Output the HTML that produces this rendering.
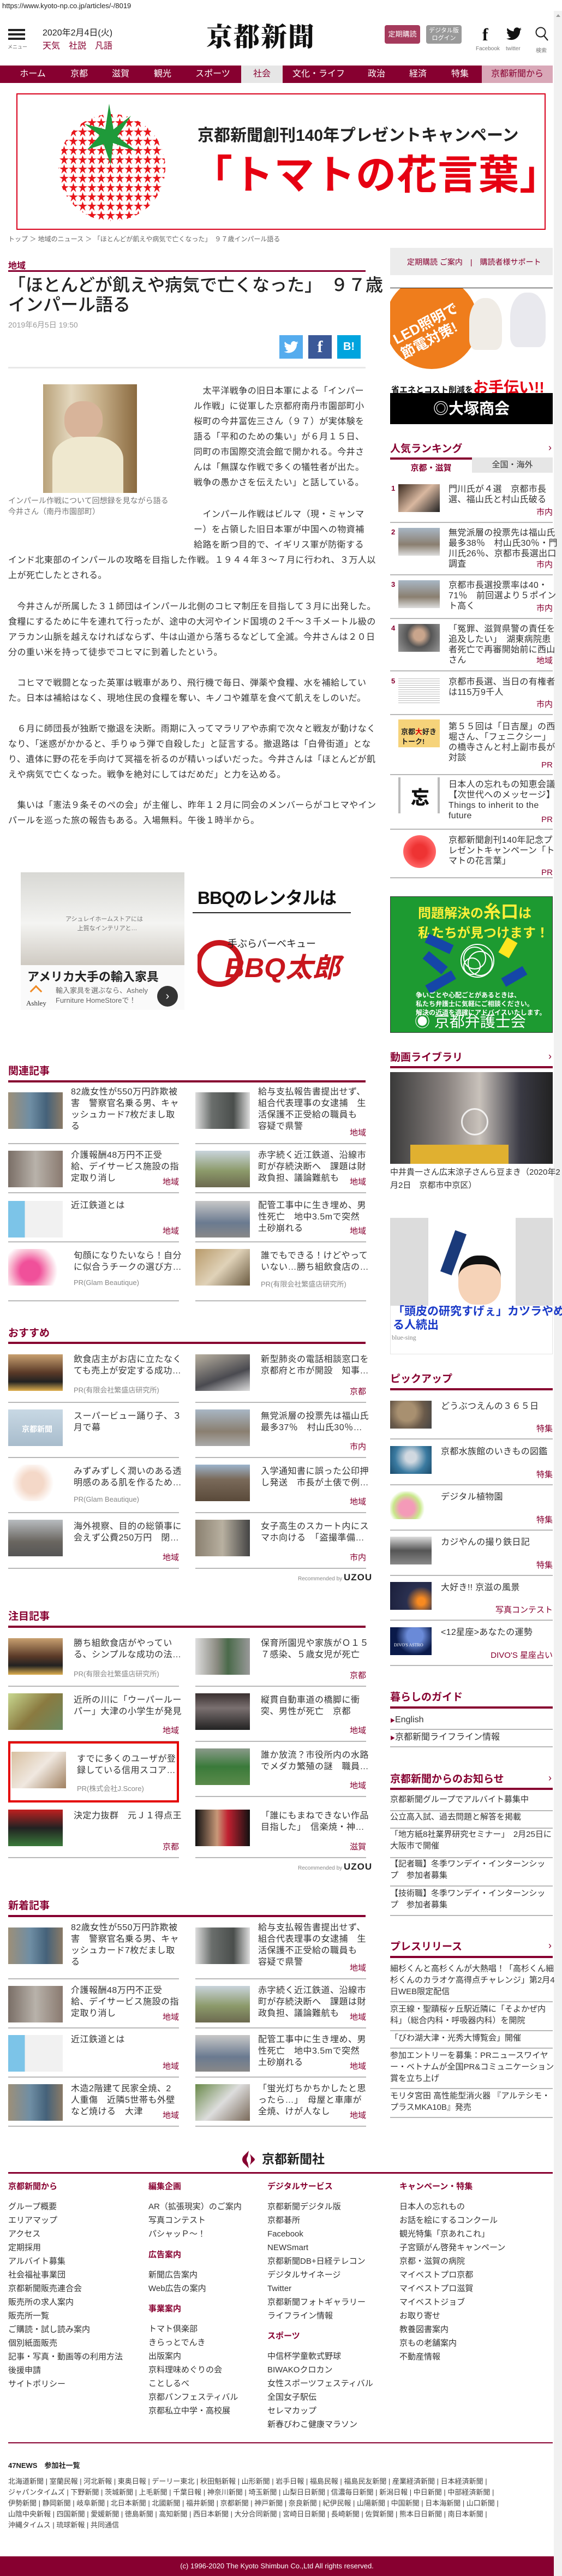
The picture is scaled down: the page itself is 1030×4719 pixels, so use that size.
<!DOCTYPE html>
<html lang="ja"><head><meta charset="utf-8">
<style>
*{box-sizing:border-box}
body{margin:0;width:1030px;height:4719px;position:relative;background:#fff;font-family:"Liberation Sans","Noto Sans CJK JP",sans-serif;color:#333;overflow:hidden}
.a{position:absolute}
.nw{white-space:nowrap}
.cr{color:#870030}
.h2{position:absolute;font-size:19px;color:#870030;font-weight:bold;line-height:24px;white-space:nowrap}
.ln{position:absolute;height:4px;background:#870030}
.it{position:absolute;width:313px;border-bottom:2px solid #b8b8b8}
.th{position:absolute;left:0;width:100px;height:67px;display:block}
.tt{position:absolute;left:115px;margin:0;font-size:16px;line-height:21px;white-space:nowrap;color:#333;letter-spacing:.5px}
.pt{left:120px}
.ct{position:absolute;right:0;bottom:9px;font-weight:normal;color:#870030;font-size:15px}
.pr{position:absolute;left:120px;font-size:13px;color:#888;white-space:nowrap}
.si{position:absolute;left:715px;width:298px;border-bottom:2px solid #b8b8b8}
.st{position:absolute;left:107px;margin:0;font-size:16px;line-height:19px;white-space:nowrap;color:#333;letter-spacing:.3px}
.sth{position:absolute;left:15px;width:76px;height:51px;display:block}
.num{position:absolute;left:2px;font-size:13px;font-weight:bold;color:#870030}
.sc{position:absolute;right:0;bottom:8px;color:#870030;font-size:15px}
.pk .sth{left:0}
.pk .st{left:93px}
.bl{position:absolute;white-space:nowrap;font-size:16px;letter-spacing:.45px;line-height:28px;color:#333}
.fl{position:absolute;font-size:15px;line-height:25px;color:#333;white-space:nowrap}
.fh{font-weight:bold;color:#870030;display:block;height:37px;line-height:25px}
.ni{position:absolute;top:0;height:32px;line-height:32px;text-align:center;color:#fff;font-size:16px}
.ls{position:absolute;left:715px;width:298px;font-size:15px;line-height:21px;white-space:nowrap;color:#333;border-bottom:2px solid #b8b8b8}
</style></head><body>

<div class="a nw" style="left:4px;top:3px;font-size:13px;color:#222">https://www.kyoto-np.co.jp/articles/-/8019</div>
<div class="a" style="left:1015px;top:20px;width:15px;height:4699px;background:#f1f1f1"></div>
<div class="a" style="left:1019px;top:26px;width:0;height:0;border-left:4px solid transparent;border-right:4px solid transparent;border-bottom:5px solid #999"></div>

<div class="a" style="left:15px;top:53px;width:31px;height:4px;background:#222"></div>
<div class="a" style="left:15px;top:61px;width:31px;height:4px;background:#222"></div>
<div class="a" style="left:15px;top:69px;width:31px;height:4px;background:#222"></div>
<div class="a nw" style="left:14px;top:79px;font-size:9px;color:#666">メニュー</div>
<div class="a nw" style="left:78px;top:46px;font-size:16px;color:#222">2020年2月4日(火)</div>
<div class="a nw cr" style="left:78px;top:70px;font-size:16px">天気　社説　凡語</div>
<div class="a nw" style="left:378px;top:36px;font-size:48px;font-weight:900;font-family:'Noto Serif CJK SC',serif;color:#111;letter-spacing:2px;line-height:56px">京都新聞</div>
<div class="a" style="left:705px;top:46px;width:65px;height:34px;background:#a53a5c;border-radius:4px;color:#fff;font-size:13px;text-align:center;line-height:34px">定期購読</div>
<div class="a" style="left:781px;top:46px;width:65px;height:34px;background:#9a9a9a;border-radius:4px;color:#fff;font-size:11px;text-align:center;line-height:14px;padding-top:3px">デジタル版<br>ログイン</div>
<div class="a" style="left:884px;top:46px;font-size:32px;font-weight:bold;color:#111;font-family:'Liberation Serif',serif;line-height:34px">f</div>
<svg class="a" style="left:928px;top:50px" width="28" height="24" viewBox="0 0 24 20"><path d="M24 2.4a9.8 9.8 0 0 1-2.8.8A4.9 4.9 0 0 0 23.3.4a9.8 9.8 0 0 1-3.1 1.2A4.9 4.9 0 0 0 11.8 6 14 14 0 0 1 1.7.9a4.9 4.9 0 0 0 1.5 6.6 4.9 4.9 0 0 1-2.2-.6 4.9 4.9 0 0 0 3.9 4.9 4.9 4.9 0 0 1-2.200.1 4.9 4.9 0 0 0 4.6 3.4A9.9 9.9 0 0 1 0 17.3 14 14 0 0 0 7.5 19.5c9 0 14-7.5 14-14v-.6A10 10 0 0 0 24 2.4z" fill="#111"/></svg>
<svg class="a" style="left:980px;top:48px" width="26" height="28" viewBox="0 0 26 28"><circle cx="11" cy="11" r="8.5" fill="none" stroke="#222" stroke-width="2"/><line x1="17" y1="17.5" x2="24" y2="26" stroke="#222" stroke-width="2.2"/></svg>
<div class="a nw" style="left:872px;top:84px;font-size:10px;color:#777">Facebook</div>
<div class="a nw" style="left:927px;top:84px;font-size:10px;color:#777">twitter</div>
<div class="a nw" style="left:982px;top:84px;font-size:10px;color:#777">検索</div>

<div class="a" style="left:0;top:120px;width:1013px;height:32px;background:#870030">
<div class="ni" style="left:20px;width:80px">ホーム</div>
<div class="ni" style="left:105px;width:80px">京都</div>
<div class="ni" style="left:181px;width:80px">滋賀</div>
<div class="ni" style="left:258px;width:80px">観光</div>
<div class="ni" style="left:345px;width:90px">スポーツ</div>
<div class="ni" style="left:442px;width:76px;background:#e6e6e6;color:#870030">社会</div>
<div class="ni" style="left:534px;width:100px">文化・ライフ</div>
<div class="ni" style="left:650px;width:80px">政治</div>
<div class="ni" style="left:726px;width:80px">経済</div>
<div class="ni" style="left:803px;width:80px">特集</div>
<div class="ni" style="left:883px;width:130px;background:#d9a8b8;color:#870030">京都新聞から</div>
</div>

<div class="a" style="left:30px;top:171px;width:970px;height:250px;border:2px solid #d9001b"></div>
<svg class="a" style="left:75px;top:182px" width="260" height="225" viewBox="0 0 260 225">
<defs><pattern id="st" width="17" height="17" patternUnits="userSpaceOnUse"><polygon points="8.5,0 10.5,6 17,6.5 11.5,10 13.5,17 8.5,12.5 3.5,17 5.5,10 0,6.5 6.5,6" fill="#e8151b"/></pattern></defs>
<circle cx="130" cy="125" r="98" fill="url(#st)"/>
<path d="M125 8 L133 55 L165 30 L140 68 L175 95 L132 80 L128 120 L115 82 L85 92 L108 66 L80 45 L118 55 Z" fill="#1f9a3a"/>
</svg>
<div class="a nw" style="left:362px;top:230px;font-size:30px;font-weight:bold;color:#222;line-height:38px">京都新聞創刊140年プレゼントキャンペーン</div>
<div class="a nw" style="left:352px;top:276px;font-size:74px;font-weight:bold;color:#e60012;line-height:90px;letter-spacing:1px">「トマトの花言葉」</div>

<div class="a nw" style="left:15px;top:429px;font-size:12px;color:#666">トップ ＞ 地域のニュース ＞ 「ほとんどが飢えや病気で亡くなった」　９７歳インパール語る</div>

<div class="a nw cr" style="left:15px;top:473px;font-size:16px;font-weight:bold">地域</div>
<div class="a" style="left:15px;top:495px;width:655px;height:3px;background:#870030"></div>
<div class="a nw" style="left:15px;top:504px;font-size:32px;line-height:36px;color:#222;font-weight:500">「ほとんどが飢えや病気で亡くなった」　９７歳<br>インパール語る</div>
<div class="a nw" style="left:15px;top:585px;font-size:14px;color:#999">2019年6月5日 19:50</div>
<div class="a" style="left:512px;top:614px;width:43px;height:43px;background:#55acee"></div>
<svg class="a" style="left:520px;top:625px" width="27" height="22" viewBox="0 0 24 20"><path d="M24 2.4a9.8 9.8 0 0 1-2.8.8A4.9 4.9 0 0 0 23.3.4a9.8 9.8 0 0 1-3.1 1.2A4.9 4.9 0 0 0 11.8 6 14 14 0 0 1 1.7.9a4.9 4.9 0 0 0 1.5 6.6 4.9 4.9 0 0 1-2.2-.6 4.9 4.9 0 0 0 3.9 4.9 4.9 4.9 0 0 1-2.2.1 4.9 4.9 0 0 0 4.6 3.4A9.9 9.9 0 0 1 0 17.3 14 14 0 0 0 7.5 19.5c9 0 14-7.5 14-14v-.6A10 10 0 0 0 24 2.4z" fill="#fff"/></svg>
<div class="a" style="left:565px;top:614px;width:43px;height:43px;background:#3b5998;color:#fff;font-size:30px;font-weight:bold;text-align:center;line-height:43px;font-family:'Liberation Serif',serif">f</div>
<div class="a" style="left:618px;top:614px;width:43px;height:43px;background:#00a4de;color:#fff;font-size:20px;font-weight:bold;text-align:center;line-height:43px">B!</div>
<div class="a" style="left:15px;top:672px;width:655px;height:3px;background:#e8e8e8"></div>

<div class="a" style="left:79px;top:704px;width:172px;height:199px;background:linear-gradient(90deg,#b9a27a 0%,#e4d8bf 30%,#c7b08a 60%,#8a6a40 100%)"></div>
<div class="a" style="left:118px;top:735px;width:70px;height:70px;border-radius:45%;background:#d8b49a"></div>
<div class="a" style="left:96px;top:800px;width:130px;height:103px;border-radius:40% 40% 0 0;background:#efe8cf"></div>
<div class="a nw" style="left:15px;top:907px;font-size:14px;line-height:20px;color:#777">インパール作戦について回想録を見ながら語る<br>今井さん（南丹市園部町）</div>

<div class="bl" style="left:355px;top:703px">　太平洋戦争の旧日本軍による「インパー<br>ル作戦」に従軍した京都府南丹市園部町小<br>桜町の今井冨佐三さん（９７）が実体験を<br>語る「平和のための集い」が６月１５日、<br>同町の市国際交流会館で開かれる。今井さ<br>んは「無謀な作戦で多くの犠牲者が出た。<br>戦争の愚かさを伝えたい」と話している。</div>
<div class="bl" style="left:355px;top:929px">　インパール作戦はビルマ（現・ミャンマ<br>ー）を占領した旧日本軍が中国への物資補<br>給路を断つ目的で、イギリス軍が防衛する</div>
<div class="bl" style="left:15px;top:1013px">インド北東部のインパールの攻略を目指した作戦。１９４４年３～７月に行われ、３万人以<br>上が死亡したとされる。</div>
<div class="bl" style="left:15px;top:1098px">　今井さんが所属した３１師団はインパール北側のコヒマ制圧を目指して３月に出発した。<br>食糧にするために牛を連れて行ったが、途中の大河やインド国境の２千～３千メートル級の<br>アラカン山脈を越えなければならず、牛は山道から落ちるなどして全滅。今井さんは２０日<br>分の重い米を持って徒歩でコヒマに到着したという。</div>
<div class="bl" style="left:15px;top:1238px">　コヒマで戦闘となった英軍は戦車があり、飛行機で毎日、弾薬や食糧、水を補給してい<br>た。日本は補給はなく、現地住民の食糧を奪い、キノコや雑草を食べて飢えをしのいだ。</div>
<div class="bl" style="left:15px;top:1322px">　６月に師団長が独断で撤退を決断。雨期に入ってマラリアや赤痢で次々と戦友が動けなく<br>なり、「迷惑がかかると、手りゅう弾で自殺した」と証言する。撤退路は「白骨街道」とな<br>り、遺体に野の花を手向けて冥福を祈るのが精いっぱいだった。今井さんは「ほとんどが飢<br>えや病気で亡くなった。戦争を絶対にしてはだめだ」と力を込める。</div>
<div class="bl" style="left:15px;top:1462px">　集いは「憲法９条そのぺの会」が主催し、昨年１２月に同会のメンバーらがコヒマやイン<br>パールを巡った旅の報告もある。入場無料。午後１時半から。</div>

<div class="a" style="left:38px;top:1598px;width:300px;height:252px;background:#fafafa"></div>
<div class="a" style="left:38px;top:1598px;width:300px;height:170px;background:linear-gradient(180deg,#d8d8d4,#f4f4f2 55%,#cfcac2)"></div>
<div class="a nw" style="left:120px;top:1676px;font-size:11px;color:#777;text-align:center;line-height:17px">アシュレイホームストアには<br>　上質なインテリアと…</div>
<div class="a nw" style="left:50px;top:1772px;font-size:22px;font-weight:bold;color:#222">アメリカ大手の輸入家具</div>
<div class="a" style="left:58px;top:1808px;width:16px;height:16px;border:3px solid #f08a24;transform:rotate(45deg);border-right:none;border-bottom:none"></div>
<div class="a nw" style="left:48px;top:1830px;font-size:13px;font-family:'Liberation Serif',serif;color:#333">Ashley</div>
<div class="a nw" style="left:102px;top:1806px;font-size:13px;color:#666;line-height:18px">輸入家具を選ぶなら、Ashely<br>Furniture HomeStoreで！</div>
<div class="a" style="left:288px;top:1806px;width:38px;height:38px;border-radius:50%;background:#333;color:#fff;text-align:center;line-height:38px;font-size:20px">›</div>
<div class="a nw" style="left:362px;top:1620px;font-size:32px;font-weight:bold;color:#111;letter-spacing:-1px">BBQのレンタルは</div>
<div class="a" style="left:353px;top:1671px;width:290px;height:2px;background:#222"></div>
<svg class="a" style="left:362px;top:1710px" width="275" height="100" viewBox="0 0 275 100"><circle cx="40" cy="55" r="38" fill="none" stroke="#c8161d" stroke-width="10"/><text x="50" y="80" font-size="50" font-weight="bold" fill="#c8161d" font-family="Liberation Sans,Noto Sans CJK JP,sans-serif" font-style="italic">BBQ太郎</text><text x="55" y="25" font-size="18" fill="#222" font-family="Noto Sans CJK JP,sans-serif">手ぶらバーベキュー</text></svg>

<div class="a" style="left:715px;top:454px;width:298px;height:50px;background:#ececec"></div>
<div class="a nw cr" style="left:746px;top:470px;font-size:14px">定期購読 ご案内　|　購読者様サポート</div>
<div class="a" style="left:715px;top:527px;width:298px;height:250px;background:#fff;border-top:1px solid #222;overflow:hidden">
<div class="a" style="left:-9px;top:-22px;width:170px;height:170px;border-radius:50%;background:#ef7d1c"></div>
<div class="a nw" style="left:7px;top:48px;font-size:26px;font-weight:bold;color:#fff;transform:rotate(-28deg);line-height:30px">LED照明で<br>節電対策!</div>
<div class="a" style="left:145px;top:18px;width:60px;height:95px;border-radius:45% 45% 20% 20%;background:#f0ece6"></div>
<div class="a" style="left:220px;top:8px;width:65px;height:100px;border-radius:45% 45% 20% 20%;background:#e9e9ee"></div>
</div>
<div class="a nw" style="left:717px;top:688px;font-size:15px;font-weight:bold;color:#111">省エネとコスト削減を<span style="color:#e50012;font-size:28px">お手伝い!!</span></div>
<div class="a" style="left:715px;top:720px;width:298px;height:57px;background:#000;color:#fff;font-size:28px;font-weight:bold;text-align:center;line-height:57px">◎大塚商会</div>

<div class="h2" style="left:715px;top:811px">人気ランキング</div>
<div class="a nw cr" style="left:1005px;top:810px;font-size:18px">›</div>
<div class="a" style="left:715px;top:838px;width:150px;height:4px;background:#870030"></div>
<div class="a" style="left:865px;top:838px;width:148px;height:28px;background:#e6e6e6;text-align:center;font-size:15px;line-height:28px;color:#333">全国・海外</div>
<div class="a cr" style="left:715px;top:846px;width:150px;text-align:center;font-size:15px;font-weight:bold">京都・滋賀</div>

<div class="si" style="top:870px;height:88px"><span class="num" style="top:17px">1</span><i class="sth" style="top:17px;background:linear-gradient(135deg,#3a2a20,#d9b8a0 50%,#222)"></i><p class="st" style="top:17px">門川氏が４選　京都市長<br>選、福山氏と村山氏破る</p><span class="sc">市内</span></div>
<div class="si" style="top:958px;height:96px"><span class="num" style="top:9px">2</span><i class="sth" style="top:9px;background:linear-gradient(180deg,#a8b6c4,#8a7f70 60%,#ddd)"></i><p class="st" style="top:9px">無党派層の投票先は福山氏<br>最多38％　村山氏30％・門<br>川氏26％、京都市長選出口<br>調査</p><span class="sc">市内</span></div>
<div class="si" style="top:1054px;height:80px"><span class="num" style="top:9px">3</span><i class="sth" style="top:9px;background:linear-gradient(180deg,#a8b6c4,#8a7f70 60%,#ddd)"></i><p class="st" style="top:9px">京都市長選投票率は40・<br>71％　前回選より５ポイン<br>ト高く</p><span class="sc">市内</span></div>
<div class="si" style="top:1134px;height:96px"><span class="num" style="top:9px">4</span><i class="sth" style="top:9px;background:radial-gradient(circle at 50% 40%,#c9a58c 20%,#555 45%,#999)"></i><p class="st" style="top:9px">「冤罪、滋賀県警の責任を<br>追及したい」　湖東病院患<br>者死亡で再審開始前に西山<br>さん</p><span class="sc">地域</span></div>
<div class="si" style="top:1230px;height:80px"><span class="num" style="top:10px">5</span><i class="sth" style="top:10px;background:repeating-linear-gradient(180deg,#fff 0 3px,#bbb 3px 4px)"></i><p class="st" style="top:10px">京都市長選、当日の有権者<br>は115万9千人</p><span class="sc">市内</span></div>
<div class="si" style="top:1310px;height:110px"><i class="sth" style="top:8px;background:#f6d37a"></i><span class="a nw" style="left:20px;top:22px;font-size:13px;font-weight:bold;color:#222;line-height:18px">京都<span style="color:#d00">大</span>好き<br>トーク!</span><p class="st" style="top:12px">第５５回は「日吉屋」の西<br>堀さん、「フェニクシー」<br>の橋寺さんと村上副市長が<br>対談</p><span class="sc">PR</span></div>
<div class="si" style="top:1420px;height:100px"><i class="sth" style="top:4px;height:66px;background:#fff;border-left:4px solid #bbb;border-right:4px solid #bbb"></i><span class="a" style="left:38px;top:14px;font-size:34px;font-weight:900;color:#111">忘</span><p class="st" style="top:8px">日本人の忘れもの知恵会議<br>【次世代へのメッセージ】<br>Things to inherit to the<br>future</p><span class="sc">PR</span></div>
<div class="si" style="top:1520px;height:89px"><i class="sth" style="top:10px;left:24px;width:60px;height:60px;border-radius:50%;background:radial-gradient(circle,#e33 30%,#f66 70%)"></i><p class="st" style="top:10px">京都新聞創刊140年記念プ<br>レゼントキャンペーン「ト<br>マトの花言葉」</p><span class="sc" style="bottom:0">PR</span></div>

<div class="a" style="left:715px;top:1642px;width:298px;height:250px;background:#1d9a31;border:1px solid #333"></div>
<div class="a nw" style="left:766px;top:1652px;font-size:24px;font-weight:bold;color:#ffef3a;line-height:36px">問題解決の<span style="font-size:32px">糸口</span>は<br>私たちが見つけます！</div>
<svg class="a" style="left:770px;top:1700px" width="200" height="120" viewBox="0 0 200 120"><g fill="none" stroke="#fff" stroke-width="2"><circle cx="105" cy="60" r="30"/><circle cx="100" cy="55" r="20"/><circle cx="110" cy="65" r="22"/><circle cx="95" cy="70" r="15"/></g><rect x="10" y="20" width="50" height="18" fill="#1546a8" transform="rotate(25 35 29)"/><rect x="5" y="55" width="45" height="18" fill="#1546a8" transform="rotate(40 28 64)"/><rect x="10" y="90" width="55" height="18" fill="#1546a8" transform="rotate(-30 38 99)"/><rect x="150" y="80" width="45" height="18" fill="#1546a8" transform="rotate(-30 172 89)"/><rect x="150" y="20" width="22" height="32" fill="#ffe61f" transform="rotate(30 161 36)"/></svg>
<div class="a nw" style="left:762px;top:1815px;font-size:12px;font-weight:bold;color:#fff;line-height:16px">争いごとや心配ごとがあるときは、<br>私たち弁護士に気軽にご相談ください。<br>解決の近道を適確にアドバイスいたします。</div>
<div class="a nw" style="left:760px;top:1855px;font-size:28px;color:#fff;line-height:34px">◉ 京都弁護士会</div>

<div class="h2" style="left:715px;top:1926px">動画ライブラリ</div>
<div class="a nw cr" style="left:1005px;top:1925px;font-size:18px">›</div>
<div class="ln" style="left:715px;top:1953px;width:298px"></div>
<div class="a" style="left:715px;top:1964px;width:298px;height:168px;background:linear-gradient(90deg,#3a3a3a,#8a8380 35%,#c9c2bb 55%,#3a3a44 80%,#222)"></div>
<div class="a" style="left:752px;top:2097px;width:180px;height:35px;background:#e0b030"></div>
<div class="a" style="left:845px;top:2030px;width:50px;height:50px;border-radius:50%;border:3px solid rgba(255,255,255,.8)"></div>
<div class="a nw" style="left:715px;top:2136px;font-size:15px;line-height:24px;color:#333">中井貴一さん広末涼子さんら豆まき（2020年2<br>月2日　京都市中京区）</div>

<div class="h2" style="left:15px;top:1951px">関連記事</div>
<div class="ln" style="left:15px;top:1979px;width:655px"></div>
<div class="it" style="left:15px;top:1987px;height:109px"><i class="th" style="top:14px;background:linear-gradient(90deg,#9d8f78,#6f8ea4 40%,#45627a 70%,#8a7a66)"></i><p class="tt" style="top:3px">82歳女性が550万円詐欺被<br>害　警察官名乗る男、キャ<br>ッシュカード7枚だまし取<br>る</p></div>
<div class="it" style="left:358px;top:1987px;height:109px"><i class="th" style="top:14px;background:linear-gradient(90deg,#ddd,#6a6e6c 30%,#4a4e4c 70%,#ddd)"></i><p class="tt" style="top:3px">給与支払報告書提出せず、<br>組合代表理事の女逮捕　生<br>活保護不正受給の職員も<br>容疑で県警</p><b class="ct">地域</b></div>
<div class="it" style="left:15px;top:2096px;height:90px"><i class="th" style="top:12px;background:linear-gradient(90deg,#7a6e66,#b8b2aa 50%,#8a7a70)"></i><p class="tt" style="top:10px">介護報酬48万円不正受<br>給、デイサービス施設の指<br>定取り消し</p><b class="ct">地域</b></div>
<div class="it" style="left:358px;top:2096px;height:90px"><i class="th" style="top:12px;background:linear-gradient(180deg,#c9d4dc,#8c9a6a 55%,#6c6a50)"></i><p class="tt" style="top:10px">赤字続く近江鉄道、沿線市<br>町が存続決断へ　課題は財<br>政負担、議論難航も</p><b class="ct">地域</b></div>
<div class="it" style="left:15px;top:2186px;height:90px"><i class="th" style="top:14px;background:linear-gradient(90deg,#7cc4e8 30%,#f1f1f1 31%)"></i><p class="tt" style="top:12px">近江鉄道とは</p><b class="ct">地域</b></div>
<div class="it" style="left:358px;top:2186px;height:90px"><i class="th" style="top:14px;background:linear-gradient(180deg,#c8c8c8,#6a7a90 60%,#888)"></i><p class="tt" style="top:12px">配管工事中に生き埋め、男<br>性死亡　地中3.5mで突然<br>土砂崩れる</p><b class="ct">地域</b></div>
<div class="it" style="left:15px;top:2276px;height:108px"><i class="th" style="top:12px;background:radial-gradient(circle at 40% 60%,#f0509a 25%,#f8b8d0 50%,#fff 70%)"></i><p class="tt pt" style="top:14px">旬顔になりたいなら！自分<br>に似合うチークの選び方…</p><span class="pr" style="top:66px">PR(Glam Beautique)</span></div>
<div class="it" style="left:358px;top:2276px;height:108px"><i class="th" style="top:12px;background:linear-gradient(135deg,#b89a6a,#e0d2b8 50%,#6a5a40)"></i><p class="tt pt" style="top:14px">誰でもできる！けどやって<br>いない…勝ち組飲食店の…</p><span class="pr" style="top:66px">PR(有限会社繁盛店研究所)</span></div>

<div class="h2" style="left:15px;top:2431px">おすすめ</div>
<div class="ln" style="left:15px;top:2458px;width:655px"></div>
<div class="it" style="left:15px;top:2466px;height:104px"><i class="th" style="top:15px;background:linear-gradient(180deg,#c8a070,#5a3a28 50%,#222 75%,#e0b050)"></i><p class="tt pt" style="top:14px">飲食店主がお店に立たなく<br>ても売上が安定する成功…</p><span class="pr" style="top:70px">PR(有限会社繁盛店研究所)</span></div>
<div class="it" style="left:358px;top:2466px;height:104px"><i class="th" style="top:15px;background:linear-gradient(160deg,#b8b0a0,#4a4a50 60%,#ddd)"></i><p class="tt pt" style="top:14px">新型肺炎の電話相談窓口を<br>京都府と市が開設　知事…</p><b class="ct">京都</b></div>
<div class="it" style="left:15px;top:2570px;height:101px"><i class="th" style="top:12px;background:linear-gradient(180deg,#c8d8e4,#a8bccc)"></i><span class="a nw" style="left:25px;top:38px;color:#fff;font-size:14px;font-weight:bold">京都新聞</span><p class="tt pt" style="top:14px">スーパービュー踊り子、３<br>月で幕</p></div>
<div class="it" style="left:358px;top:2570px;height:101px"><i class="th" style="top:12px;background:linear-gradient(180deg,#a8b6c4,#8a7f70 60%,#aaa)"></i><p class="tt pt" style="top:14px">無党派層の投票先は福山氏<br>最多37％　村山氏30％…</p><b class="ct">市内</b></div>
<div class="it" style="left:15px;top:2671px;height:101px"><i class="th" style="top:12px;background:radial-gradient(circle at 45% 50%,#f4d8c8 30%,#fff 60%)"></i><p class="tt pt" style="top:14px">みずみずしく潤いのある透<br>明感のある肌を作るため…</p><span class="pr" style="top:68px">PR(Glam Beautique)</span></div>
<div class="it" style="left:358px;top:2671px;height:101px"><i class="th" style="top:12px;background:linear-gradient(180deg,#9cb4cc,#7a6a5a 40%,#5a4a3a)"></i><p class="tt pt" style="top:14px">入学通知書に誤った公印押<br>し発送　市長が土俵で例…</p><b class="ct">地域</b></div>
<div class="it" style="left:15px;top:2772px;height:102px"><i class="th" style="top:12px;background:linear-gradient(180deg,#b8bcc0,#6a6660 60%,#555)"></i><p class="tt pt" style="top:14px">海外視察、目的の総領事に<br>会えず公費250万円　閉…</p><b class="ct">地域</b></div>
<div class="it" style="left:358px;top:2772px;height:102px"><i class="th" style="top:12px;background:linear-gradient(90deg,#8a8070,#b8b0a0 50%,#444)"></i><p class="tt pt" style="top:14px">女子高生のスカート内にス<br>マホ向ける　「盗撮準備…</p><b class="ct">市内</b></div>
<div class="a nw" style="left:546px;top:2880px;font-size:10px;color:#888">Recommended by <b style="font-size:17px;color:#222;letter-spacing:1px">UZOU</b></div>

<div class="h2" style="left:15px;top:2950px">注目記事</div>
<div class="ln" style="left:15px;top:2978px;width:655px"></div>
<div class="it" style="left:15px;top:2986px;height:104px"><i class="th" style="top:15px;background:linear-gradient(180deg,#c8a070,#5a3a28 50%,#222 75%,#e0b050)"></i><p class="tt pt" style="top:14px">勝ち組飲食店がやってい<br>る、シンプルな成功の法…</p><span class="pr" style="top:70px">PR(有限会社繁盛店研究所)</span></div>
<div class="it" style="left:358px;top:2986px;height:104px"><i class="th" style="top:15px;background:linear-gradient(90deg,#ddd,#8a8a80 40%,#4a6a4a 60%,#999)"></i><p class="tt pt" style="top:14px">保育所園児や家族がＯ１５<br>７感染、５歳女児が死亡</p><b class="ct">京都</b></div>
<div class="it" style="left:15px;top:3090px;height:101px"><i class="th" style="top:12px;background:linear-gradient(135deg,#c8d890,#8a7a40 50%,#6a8a60)"></i><p class="tt pt" style="top:14px">近所の川に「ウーパールー<br>パー」大津の小学生が発見</p><b class="ct">地域</b></div>
<div class="it" style="left:358px;top:3090px;height:101px"><i class="th" style="top:12px;background:linear-gradient(180deg,#3a3030,#7a7070 40%,#222)"></i><p class="tt pt" style="top:14px">縦貫自動車道の橋脚に衝<br>突、男性が死亡　京都</p><b class="ct">地域</b></div>
<div class="a" style="left:15px;top:3190px;width:313px;height:112px;border:4px solid #e40000"></div>
<i class="a" style="left:21px;top:3209px;width:100px;height:67px;background:linear-gradient(135deg,#d8c0a0,#f0e8e0 50%,#a08060)"></i>
<p class="tt a" style="left:141px;top:3212px">すでに多くのユーザが登<br>録している信用スコア…</p>
<span class="pr" style="left:141px;top:3266px">PR(株式会社J.Score)</span>
<div class="it" style="left:358px;top:3191px;height:101px"><i class="th" style="top:12px;background:linear-gradient(180deg,#8a9a8a,#3a7a3a 50%,#5a8a4a)"></i><p class="tt pt" style="top:14px">誰か放流？市役所内の水路<br>でメダカ繁殖の謎　職員…</p><b class="ct">地域</b></div>
<div class="it" style="left:15px;top:3302px;height:102px"><i class="th" style="top:13px;background:linear-gradient(180deg,#c02020,#222 50%,#3a7a3a)"></i><p class="tt pt" style="top:14px">決定力抜群　元Ｊ１得点王</p><b class="ct">京都</b></div>
<div class="it" style="left:358px;top:3292px;height:112px"><i class="th" style="top:23px;background:linear-gradient(90deg,#111,#c89878 40%,#c02030 60%,#111)"></i><p class="tt pt" style="top:24px">「誰にもまねできない作品<br>目指した」　信楽焼・神…</p><b class="ct">滋賀</b></div>
<div class="a nw" style="left:546px;top:3410px;font-size:10px;color:#888">Recommended by <b style="font-size:17px;color:#222;letter-spacing:1px">UZOU</b></div>

<div class="h2" style="left:15px;top:3480px">新着記事</div>
<div class="ln" style="left:15px;top:3508px;width:655px"></div>
<div class="it" style="left:15px;top:3516px;height:110px"><i class="th" style="top:15px;background:linear-gradient(90deg,#9d8f78,#6f8ea4 40%,#45627a 70%,#8a7a66)"></i><p class="tt" style="top:5px">82歳女性が550万円詐欺被<br>害　警察官名乗る男、キャ<br>ッシュカード7枚だまし取<br>る</p></div>
<div class="it" style="left:358px;top:3516px;height:110px"><i class="th" style="top:15px;background:linear-gradient(90deg,#ddd,#6a6e6c 30%,#4a4e4c 70%,#ddd)"></i><p class="tt" style="top:5px">給与支払報告書提出せず、<br>組合代表理事の女逮捕　生<br>活保護不正受給の職員も<br>容疑で県警</p><b class="ct">地域</b></div>
<div class="it" style="left:15px;top:3626px;height:90px"><i class="th" style="top:12px;background:linear-gradient(90deg,#7a6e66,#b8b2aa 50%,#8a7a70)"></i><p class="tt" style="top:10px">介護報酬48万円不正受<br>給、デイサービス施設の指<br>定取り消し</p><b class="ct">地域</b></div>
<div class="it" style="left:358px;top:3626px;height:90px"><i class="th" style="top:12px;background:linear-gradient(180deg,#c9d4dc,#8c9a6a 55%,#6c6a50)"></i><p class="tt" style="top:10px">赤字続く近江鉄道、沿線市<br>町が存続決断へ　課題は財<br>政負担、議論難航も</p><b class="ct">地域</b></div>
<div class="it" style="left:15px;top:3716px;height:90px"><i class="th" style="top:12px;background:linear-gradient(90deg,#7cc4e8 30%,#f1f1f1 31%)"></i><p class="tt" style="top:10px">近江鉄道とは</p><b class="ct">地域</b></div>
<div class="it" style="left:358px;top:3716px;height:90px"><i class="th" style="top:12px;background:linear-gradient(180deg,#c8c8c8,#6a7a90 60%,#888)"></i><p class="tt" style="top:10px">配管工事中に生き埋め、男<br>性死亡　地中3.5mで突然<br>土砂崩れる</p><b class="ct">地域</b></div>
<div class="it" style="left:15px;top:3806px;height:90px"><i class="th" style="top:12px;background:linear-gradient(90deg,#9d8f78,#6f8ea4 40%,#45627a 70%,#8a7a66)"></i><p class="tt" style="top:10px">木造2階建て民家全焼、2<br>人重傷　近隣5世帯も外壁<br>など焼ける　大津</p><b class="ct">地域</b></div>
<div class="it" style="left:358px;top:3806px;height:90px"><i class="th" style="top:12px;background:linear-gradient(135deg,#6a8a4a,#ddd 50%,#7a6a5a)"></i><p class="tt" style="top:10px">「蛍光灯ちかちかしたと思<br>ったら…」　母屋と車庫が<br>全焼、けが人なし</p><b class="ct">地域</b></div>

<div class="a" style="left:715px;top:2231px;width:298px;height:250px;border:1px solid #e4e4e4"></div>
<div class="a" style="left:715px;top:2231px;width:298px;height:161px;background:#dcdcdc"></div>
<div class="a" style="left:785px;top:2231px;width:160px;height:161px;background:#fff"></div>
<div class="a" style="left:820px;top:2255px;width:22px;height:80px;background:#1a3a7a;transform:rotate(20deg)"></div>
<div class="a" style="left:840px;top:2300px;width:78px;height:90px;border-radius:45% 45% 40% 40%;background:#f6d3b8;border-top:16px solid #111"></div>
<div class="a nw" style="left:720px;top:2390px;font-size:21px;font-weight:bold;color:#1a3ac8;line-height:25px">「頭皮の研究すげぇ」カツラやめ<br>る人続出</div>
<div class="a nw" style="left:718px;top:2443px;font-size:12px;color:#888;font-family:'Liberation Serif',serif">blue-sing</div>

<div class="h2" style="left:715px;top:2515px">ピックアップ</div>
<div class="ln" style="left:715px;top:2543px;width:298px"></div>
<div class="si pk" style="top:2549px;height:88px"><i class="sth" style="top:17px;background:radial-gradient(circle at 40% 40%,#a89070 30%,#6a5a4a 60%,#444)"></i><p class="st" style="top:18px">どうぶつえんの３６５日</p><span class="sc">特集</span></div>
<div class="si pk" style="top:2637px;height:84px"><i class="sth" style="top:12px;background:radial-gradient(circle at 50% 40%,#d0d8e0 20%,#3a7aa0 60%,#1a4a6a)"></i><p class="st" style="top:13px">京都水族館のいきもの図鑑</p><span class="sc">特集</span></div>
<div class="si pk" style="top:2721px;height:83px"><i class="sth" style="top:11px;background:radial-gradient(circle at 40% 60%,#f49ab8 25%,#c8e88a 45%,#fff 60%)"></i><p class="st" style="top:12px">デジタル植物園</p><span class="sc">特集</span></div>
<div class="si pk" style="top:2804px;height:83px"><i class="sth" style="top:11px;background:linear-gradient(180deg,#ddd,#555 50%,#888)"></i><p class="st" style="top:12px">カジやんの撮り鉄日記</p><span class="sc">特集</span></div>
<div class="si pk" style="top:2887px;height:82px"><i class="sth" style="top:11px;background:radial-gradient(circle at 75% 70%,#f88a20 10%,#2a3050 40%,#1a1e3a)"></i><p class="st" style="top:12px">大好き!! 京滋の風景</p><span class="sc">写真コンテスト</span></div>
<div class="si pk" style="top:2969px;height:83px"><i class="sth" style="top:12px;background:radial-gradient(circle at 60% 30%,#6a8ad8 25%,#0a1a4a 60%)"></i><span class="a nw" style="left:7px;top:40px;font-size:8px;color:#fff;font-family:'Liberation Serif',serif">DIVO'S ASTRO</span><p class="st" style="top:12px">&lt;12星座&gt;あなたの運勢</p><span class="sc">DIVO'S 星座占い</span></div>

<div class="h2" style="left:715px;top:3098px">暮らしのガイド</div>
<div class="ln" style="left:715px;top:3126px;width:298px"></div>
<div class="ls" style="top:3137px;height:32px;font-size:16px;line-height:28px"><span class="cr" style="font-size:9px">▶</span>English</div>
<div class="ls" style="top:3169px;height:32px;font-size:16px;line-height:28px"><span class="cr" style="font-size:9px">▶</span>京都新聞ライフライン情報</div>

<div class="h2" style="left:715px;top:3248px">京都新聞からのお知らせ</div>
<div class="a nw cr" style="left:1005px;top:3247px;font-size:18px">›</div>
<div class="ln" style="left:715px;top:3275px;width:298px"></div>
<div class="ls" style="top:3286px;height:32px">京都新聞グループでアルバイト募集中</div>
<div class="ls" style="top:3318px;height:32px">公立高入試、過去問題と解答を掲載</div>
<div class="ls" style="top:3350px;height:54px">「地方紙8社業界研究セミナー」　2月25日に<br>大阪市で開催</div>
<div class="ls" style="top:3404px;height:52px">【記者職】冬季ワンデイ・インターンシッ<br>プ　参加者募集</div>
<div class="ls" style="top:3458px;height:52px">【技術職】冬季ワンデイ・インターンシッ<br>プ　参加者募集</div>

<div class="h2" style="left:715px;top:3555px">プレスリリース</div>
<div class="a nw cr" style="left:1005px;top:3554px;font-size:18px">›</div>
<div class="ln" style="left:715px;top:3583px;width:298px"></div>
<div class="ls" style="top:3596px;height:72px">細杉くんと高杉くんが大熱唱！「高杉くん細<br>杉くんのカラオケ高得点チャレンジ」第2月4<br>日WEB限定配信</div>
<div class="ls" style="top:3670px;height:51px">京王線・聖蹟桜ヶ丘駅近隣に「そよかぜ内<br>科」（総合内科・呼吸器内科）を開院</div>
<div class="ls" style="top:3723px;height:30px">「びわ湖大津・光秀大博覧会」開催</div>
<div class="ls" style="top:3755px;height:72px">参加エントリーを募集：PRニュースワイヤ<br>ー・ベトナムが全国PR&amp;コミュニケーション<br>賞を立ち上げ</div>
<div class="ls" style="top:3829px;height:51px">モリタ宮田 高性能型消火器 『アルテシモ・<br>プラスMKA10B』発売</div>

<svg class="a" style="left:444px;top:3940px" width="24" height="32" viewBox="0 0 24 32"><path d="M12 0 L2 10 Q-2 16 2 22 L12 32 L10 22 Q6 16 10 10 Z M14 6 L22 14 Q24 16 22 18 L14 26 Q18 16 14 6Z" fill="#870030"/></svg>
<div class="a nw" style="left:480px;top:3940px;font-size:23px;font-weight:bold;color:#222;line-height:30px">京都新聞社</div>
<div class="a" style="left:15px;top:3979px;width:998px;height:3px;background:#870030"></div>

<div class="fl" style="left:15px;top:3993px"><span class="fh">京都新聞から</span>グループ概要<br>エリアマップ<br>アクセス<br>定期採用<br>アルバイト募集<br>社会福祉事業団<br>京都新聞販売連合会<br>販売所の求人案内<br>販売所一覧<br>ご購読・試し読み案内<br>個別紙面販売<br>記事・写真・動画等の利用方法<br>後援申請<br>サイトポリシー</div>
<div class="fl" style="left:272px;top:3993px"><span class="fh">編集企画</span>AR（拡張現実）のご案内<br>写真コンテスト<br>パシャッＰ～！<span class="fh" style="margin-top:13px">広告案内</span>新聞広告案内<br>Web広告の案内<span class="fh" style="margin-top:12px">事業案内</span>トマト倶楽部<br>きらっとでんき<br>出版案内<br>京料理味めぐりの会<br>ことしるべ<br>京都パンフェスティバル<br>京都私立中学・高校展</div>
<div class="fl" style="left:490px;top:3993px"><span class="fh">デジタルサービス</span>京都新聞デジタル版<br>京都碁所<br>Facebook<br>NEWSmart<br>京都新聞DB+日経テレコン<br>デジタルサイネージ<br>Twitter<br>京都新聞フォトギャラリー<br>ライフライン情報<span class="fh" style="margin-top:12px">スポーツ</span>中信杯学童軟式野球<br>BIWAKOクロカン<br>女性スポーツフェスティバル<br>全国女子駅伝<br>セレマカップ<br>新春びわこ健康マラソン</div>
<div class="fl" style="left:732px;top:3993px"><span class="fh">キャンペーン・特集</span>日本人の忘れもの<br>お話を絵にするコンクール<br>観光特集「京あれこれ」<br>子宮頸がん啓発キャンペーン<br>京都・滋賀の病院<br>マイベストプロ京都<br>マイベストプロ滋賀<br>マイベストジョブ<br>お取り寄せ<br>教養図書案内<br>京もの老舗案内<br>不動産情報</div>

<div class="a" style="left:15px;top:4474px;width:998px;height:2px;background:#870030"></div>
<div class="a nw" style="left:15px;top:4506px;font-size:13px;font-weight:bold;color:#222">47NEWS　参加社一覧</div>
<div class="a nw" style="left:15px;top:4536px;font-size:13px;line-height:20px;color:#444">北海道新聞 | 室蘭民報 | 河北新報 | 東奥日報 | デーリー東北 | 秋田魁新報 | 山形新聞 | 岩手日報 | 福島民報 | 福島民友新聞 | 産業経済新聞 | 日本経済新聞 |<br>ジャパンタイムズ | 下野新聞 | 茨城新聞 | 上毛新聞 | 千葉日報 | 神奈川新聞 | 埼玉新聞 | 山梨日日新聞 | 信濃毎日新聞 | 新潟日報 | 中日新聞 | 中部経済新聞 |<br>伊勢新聞 | 静岡新聞 | 岐阜新聞 | 北日本新聞 | 北國新聞 | 福井新聞 | 京都新聞 | 神戸新聞 | 奈良新聞 | 紀伊民報 | 山陽新聞 | 中国新聞 | 日本海新聞 | 山口新聞 |<br>山陰中央新報 | 四国新聞 | 愛媛新聞 | 徳島新聞 | 高知新聞 | 西日本新聞 | 大分合同新聞 | 宮崎日日新聞 | 長崎新聞 | 佐賀新聞 | 熊本日日新聞 | 南日本新聞 |<br>沖縄タイムス | 琉球新報 | 共同通信</div>

<div class="a" style="left:0;top:4683px;width:1015px;height:36px;background:#870030;color:#fff;font-size:13px;text-align:center;line-height:36px">(c) 1996-2020 The Kyoto Shimbun Co.,Ltd All rights reserved.</div>
</body></html>
